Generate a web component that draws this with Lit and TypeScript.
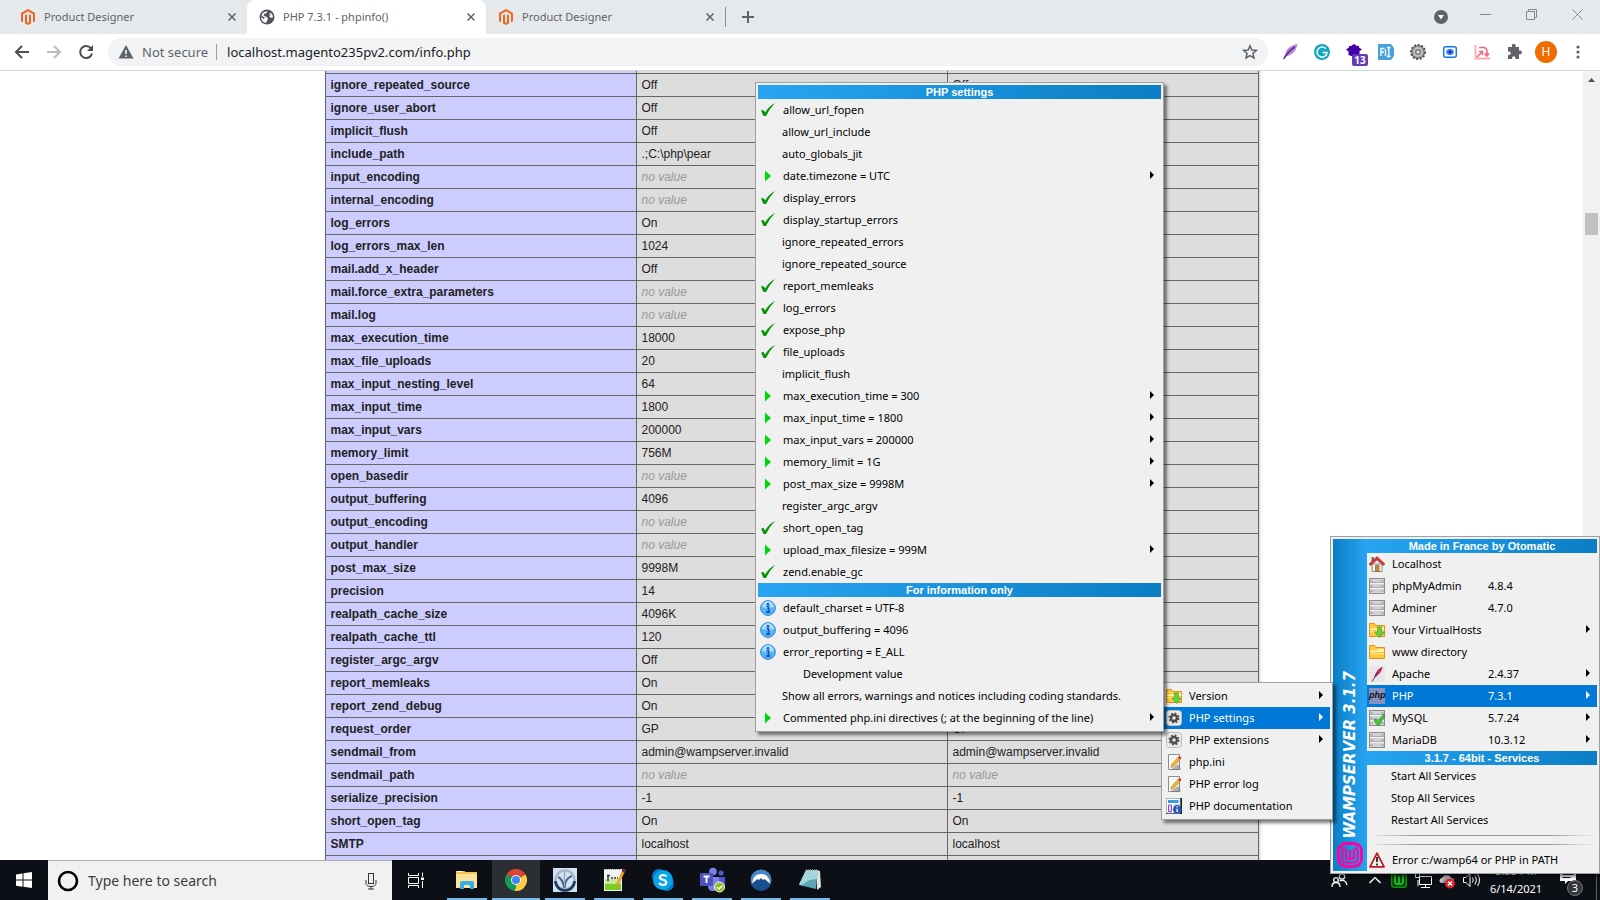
import { LitElement, html, svg, css, nothing } from "lit";
import { customElement, property } from "lit/decorators.js";
import { classMap } from "lit/directives/class-map.js";

/* ---------- icons ---------- */

const icon = (size: number, body: unknown, box = size) =>
  html`<svg width=${size} height=${size} viewBox="0 0 ${box} ${box}" aria-hidden="true">${body}</svg>`;

const magento = icon(16, svg`<path fill="#f26322" d="M8 0 1 4v8.200l2 1.100V5.200L8 2.300l5 2.900v8.100l2-1.100V4z"/>
  <path fill="#f26322" d="M5 6.300v8.100L8 16l3-1.600V6.300L9 5.200v8L8 13.800 7 13.200v-8z"/>`);
const globe = icon(16, svg`<circle cx="8" cy="8" r="7.500" fill="#50555b"/>
  <path fill="#fff" d="M8.500 2.500l-1 1.500L5 5l-.5 2 2.500.5 2 2-1 2.500-1 2C4 13.500 2 11 2 8l2.500 2L6 9 2.500 6.500C3 4 5.500 2 8.500 2.500zM10 4l2.500.5Q14 6 14 8l-2 1-2-2 1.500-1z"/>`);
const cross = icon(10, svg`<path d="M1.500 1.500l7 7m0-7l-7 7" stroke="#5f6368" stroke-width="1.500"/>`);
const plus = icon(14, svg`<path d="M7 1v12M1 7h12" stroke="#5f6368" stroke-width="2"/>`);
const back = icon(16, svg`<path d="M15 8H2.500M8 2L2 8l6 6" fill="none" stroke="#4b4f54" stroke-width="2"/>`);
const forward = icon(16, svg`<path d="M1 8h12.500M8 2l6 6-6 6" fill="none" stroke="#b9bcc0" stroke-width="2"/>`);
const reload = icon(16, svg`<path d="M13 4.500A6 6 0 1 0 14 9.500" fill="none" stroke="#4b4f54" stroke-width="2"/><path d="M15 1v6H9z" fill="#4b4f54"/>`);
const warnGrey = icon(16, svg`<path d="M8 1l7.500 13.500H.5z" fill="#5f6368"/><path d="M8 6v4M8 11.500v1.500" stroke="#fff" stroke-width="1.500"/>`);
const star = icon(16, svg`<path d="M8 1.800l1.800 4.200 4.600.4-3.500 3 1.100 4.500L8 11.500 4 13.900l1.100-4.500-3.500-3 4.600-.4z" fill="none" stroke="#5f6368" stroke-width="1.500"/>`);

const feather = icon(16, svg`<path d="M15.500 0C9 1.500 4.500 4 3.500 9.500L.5 15.500h1.500L4 12.500C11 11 14 7 15.500 0z" fill="#b58ad6"/><path d="M13 3C9 5 6 8 2 14.500" stroke="#5c2d91" stroke-width="1.400" fill="none"/>`);
const grammarly = icon(16, svg`<circle cx="8" cy="8" r="8" fill="#12a8c0"/><path d="M11.800 4.800A5 5 0 1 0 13 8.500H8.500M12.500 8.500v3" fill="none" stroke="#fff" stroke-width="1.500"/>`);
const gradCap = icon(16, svg`<path d="M8 0l3 2h2v1.500L16 5.500 13.500 7v4L8 13 2.500 11V7.500L0 5.500 3 3.500V2h2z" fill="#4200a8"/>`);
const fontTool = icon(16, svg`<path d="M0 0h13l3 4v8l-3 4H0z" fill="#46a1df"/><path d="M3 12V4.500h3.500M3 8h3M7.500 5v7M9 3.500h3.500M9 12.500h3.500M10.800 3.500v9" fill="none" stroke="#fff" stroke-width="1.300"/>`);
const cog = icon(16, svg`<circle cx="8" cy="8" r="7" fill="#8a8a8a" stroke="#555" stroke-width="2" stroke-dasharray="2 1.600"/><circle cx="8" cy="8" r="5" fill="#c2c2c2"/><circle cx="8" cy="8" r="3" fill="#777"/><circle cx="8" cy="8" r="1.500" fill="#eee"/>`);
const camera = icon(16, svg`<rect x="1.700" y="2.700" width="12.600" height="10.600" rx="2" fill="none" stroke="#1a73e8" stroke-width="1.500"/><ellipse cx="8" cy="8" rx="3.800" ry="3" fill="#2f7bff"/><circle cx="8" cy="8" r="1.400" fill="#16367c"/>`);
const ruler = icon(16, svg`<path d="M1.500 1v13.500H16" fill="none" stroke="#fba9b5" stroke-width="1.800"/><path d="M5 3.500h4q4 0 4 4V12M10.500 9.500L13 12l2-2.500M3 13l5.500-5.500M5 7.500h3.500V11" fill="none" stroke="#f4687f" stroke-width="1.600"/>`);
const puzzle = icon(16, svg`<path fill="#5f6368" d="M6 1.500a1.800 1.800 0 0 1 3.600 0V3H13v3.500h1a1.800 1.800 0 0 1 0 3.800h-1V15H9.500v-1a1.700 1.700 0 0 0-3.400 0v1H2v-4h1a1.700 1.700 0 0 0 0-3.500H2V3h4z"/>`);
const dots = icon(16, svg`<g fill="#5f6368"><circle cx="8" cy="3" r="1.600"/><circle cx="8" cy="8" r="1.600"/><circle cx="8" cy="13" r="1.600"/></g>`);

const guest = icon(14, svg`<circle cx="7" cy="7" r="7" fill="#5f6368"/><path d="M4 5h6L7 9.500z" fill="#fff"/>`);
const winMin = icon(11, svg`<path d="M0 5.500h11" stroke="#888"/>`);
const winMax = icon(11, svg`<path d="M.5 2.500h8v8h-8zM2.500 2.500v-2h8v8h-2" fill="none" stroke="#888"/>`);
const winClose = icon(11, svg`<path d="M.5.5l10 10m0-10l-10 10" stroke="#888"/>`);

const check = icon(16, svg`<path d="M1 8.500l2.500-.5L5 10.500Q9 4 15 1 9.500 6.500 6 14H3.500z" fill="#079307"/>`);
const play = icon(16, svg`<path d="M5 2.500l6 5.500-6 5.500z" fill="#00d90a"/>`);
const info = icon(16, svg`<circle cx="8" cy="8" r="7.400" fill="#55b5f6" stroke="#3f86c6"/><path d="M2 7a6 6 0 0 1 12 0Q8 9 2 7z" fill="#a5dbfd"/><path d="M6.500 6.500h2V12M6 12.200h4.200" stroke="#1353b5" stroke-width="1.700" fill="none"/><circle cx="8" cy="4.200" r="1.200" fill="#1353b5"/>`);
const folderBody = svg`<path d="M.5 1.500h5l1.500 2h8.500v11H.5z" fill="#fbc93d" stroke="#e8901c"/><path d="M1 6.500h7l1.500-1.500H15v3H1z" fill="#fff3b8"/><path d="M1 9h14v1.500H1z" fill="#fde27a"/>`;
const folder = icon(16, folderBody);
const folderDown = icon(16, svg`${folderBody}<path d="M8.500 5h4v5h3l-5 5.500-5-5.500h3z" fill="#63d13e" stroke="#3c9c25" stroke-width=".6"/>`);
const gearBox = icon(16, svg`<rect x=".5" y=".5" width="15" height="15" rx="3" fill="#e9e9e9" stroke="#bdbdbd"/><circle cx="8" cy="8" r="3" fill="none" stroke="#4c4c4c" stroke-width="2.400"/><circle cx="8" cy="8" r="4.700" fill="none" stroke="#4c4c4c" stroke-width="1.600" stroke-dasharray="1.900 1.790"/>`);
const notePen = icon(16, svg`<path d="M2.500.5h11v15h-11z" fill="#f7f7f7" stroke="#8b8b8b"/><path d="M12 10l3 5.500H5z" fill="#555" opacity=".45"/><path d="M5 13.500l1-3.500 6-6.500 2 2-6 6.500z" fill="#f6b62c" stroke="#b67a14" stroke-width=".6"/><path d="M12 3.500l1.500-1.700 2 2L14 5.500z" fill="#cf3232"/>`);
const docInfo = icon(16, svg`<path d="M0 0h16v16H0z" fill="#1b1b1b"/><path d="M.5 .5h13.500v14.500H.5z" fill="#fff" stroke="#a9b7d2"/><path d="M2 2h10.500v3H2z" fill="#3b9be0"/><path d="M2.500 7h3v6.500h-3z" fill="#ead0ff" stroke="#8a4be0"/><path d="M7.500 7H13" stroke="#9ab"/><circle cx="11.200" cy="11.200" r="4.300" fill="#2459b8"/><path d="M11.200 10.700v3.300M11.200 8.300v1.300" stroke="#fff" stroke-width="1.400"/>`);
const home = icon(16, svg`<path d="M3 8h10v7.500H3z" fill="#eee" stroke="#8d8d8d"/><path d="M6.500 9.500h3.500v6H6.500z" fill="#c98634" stroke="#8a5413" stroke-width=".6"/><path d="M2.500 1H5v5H2.500z" fill="#777"/><path d="M8 .5L16 8l-1.500 1.500L8 4 1.500 9.500 0 8z" fill="#d33a35" stroke="#95201d" stroke-width=".5"/>`);
const dbBody = svg`<rect x=".5" y=".5" width="15" height="15" fill="#d4d4d8" stroke="#8c8c8c"/><path d="M1 3h14M1 8h14M1 13h14" stroke="#b5b5bb" stroke-width="2"/><path d="M4 3h8M4 8h8M4 13h8" stroke="#d0d0d6" stroke-width="2"/><path d="M1 5.500h14M1 10.500h14" stroke="#fff"/><path d="M1 4.700h14M1 9.700h14" stroke="#85858a" stroke-width=".6"/>`;
const db = icon(16, dbBody);
const dbOk = icon(16, svg`${dbBody}<path d="M5 10l2-1.500L9 11.500l5-7 2 .5-6 10.500H8.500z" fill="#4ecb39" stroke="#22891a" stroke-width=".7"/>`);
const apache = icon(16, svg`<path fill="#e6e6e6" d="M0 0h16v16H0z"/><path d="M13.500 1C9 3 6 7 5 12 9 9.500 12 6 13.500 1z" fill="#7b2d86"/><path d="M13.500 1c-3 1.500-4.500 3-5.500 5l2.500 1.500C12 5.500 13 3 13.500 1z" fill="#d4273c"/><path d="M6.500 10L3 15.500" stroke="#a12b3a"/>`);
const phpIcon = html`<span class="php">php</span>`;
const errorTri = icon(16, svg`<path d="M8 1.200l7 13.600H1z" fill="#f4f4f4" stroke="#c0161c" stroke-width="1.800" stroke-linejoin="round"/><path d="M8 5v5M8 11.500v2" stroke="#222" stroke-width="1.800"/>`);
const wampLogo = icon(26, svg`<path d="M11 1.500H9A7.500 7.500 0 0 0 1.500 9v8A7.500 7.500 0 0 0 9 24.500h8a7.500 7.500 0 0 0 7.500-7.500V9A7.500 7.500 0 0 0 17 1.500h-2z" fill="none" stroke="#ff00a2" stroke-width="2.800"/>
  <path d="M8 5.500Q5.200 6.500 5.200 10v6.500q0 4 4.300 4h7q4.300 0 4.300-4V10q0-3.500-2.800-4.500" fill="none" stroke="#ff00a2" stroke-width="2"/>
  <path d="M9 7v7.500q0 2.500 2.300 2.500h3.400q2.300 0 2.300-2.500V7M13 8v8" fill="none" stroke="#ff00a2" stroke-width="2.200"/>`);

const windows = icon(16, svg`<path fill="#fff" d="M0 2.500L6.500 1.400v6.200H0zM7.500 1.200L16 0v7.600H7.500zM0 8.500h6.500v6.200L0 13.700zM7.500 8.500H16V16l-8.500-1.200z"/>`);
const ring = icon(22, svg`<circle cx="11" cy="11" r="9" fill="none" stroke="#000" stroke-width="2.600"/>`);
const mic = icon(18, svg`<rect x="6.500" y="1.500" width="5" height="10" fill="none" stroke="#333"/><path d="M4 8v3q0 3.500 5 3.500t5-3.500V8M9 14.500V17M6 17h6" fill="none" stroke="#333"/>`);
const taskView = icon(18, svg`<path d="M1.500 6.500h10v6h-10zM1.500 2v2.500h10V2M1.500 17v-2.500h10V17M15.500 1.500v4M15.500 10v7" fill="none" stroke="#fff"/><path fill="#fff" d="M14 6.500h3v2.500h-3z"/>`);
const explorer = icon(24, svg`<path d="M1 3h8l2 1h11v16H1z" fill="#f5c34d"/><path d="M1 6h21v14H1z" fill="#fde49b"/><path d="M2 3.500h5" stroke="#fff"/><path d="M5 21v-6q0-2 2-2h10q2 0 2 2v6h-4v-3q0-1-1-1h-4q-1 0-1 1v3z" fill="#39ace8"/>`);
const chrome = icon(24, svg`<path d="M12 12L2.500 6.500A11 11 0 0 1 21.530 6.500z" fill="#db4437"/><path d="M12 12L21.530 6.500A11 11 0 0 1 12 23z" fill="#ffcd40"/><path d="M12 12L12 23A11 11 0 0 1 2.500 6.500z" fill="#0f9d58"/><path d="M12 7h9.700L21 6H12z" fill="#db4437"/><path d="M16.300 14.500L12 23l-1.500-.5 4-6z" fill="#ffcd40"/><circle cx="12" cy="12" r="5" fill="#f1f1f1"/><circle cx="12" cy="12" r="4" fill="#4285f4"/>`);
const dataApp = icon(24, svg`<path fill="#d2e4f4" d="M0 0h24v24H0z"/><circle cx="12" cy="12" r="9.500" fill="none" stroke="#aab6c6" stroke-width="2.400"/><path d="M2.500 13a9.500 9.500 0 0 0 19 0" fill="none" stroke="#1d3a63" stroke-width="2.600"/><path d="M5 9q4 1 6.500 11Q12 10 19 8" fill="none" stroke="#46638c" stroke-width="2.200"/><path d="M11.500 4v15" stroke="#8fa3bd" stroke-width="1.400"/>`);
const notepadPP = icon(24, svg`<path fill="#f4f4f4" d="M2 1h18v22H2z"/><path fill="#7acb22" d="M3 15h16v7H3z"/><path fill="#c3ea9c" d="M3 11h16v5H3z"/><path d="M6 7v6M5 7.500h3M9 10h2M12 10h2M15 10h1" stroke="#333" stroke-width="1.500"/><path d="M3 1.500h16" stroke="#999" stroke-dasharray="1 1"/><path d="M20 3l2.500 1.500L16.500 17l-2.500 2 .3-3.500z" fill="#f0a121"/><path d="M21 .5l3 1.500-1.500 3L20 3.500z" fill="#7b3a3a"/>`);
const skype = icon(24, svg`<circle cx="8" cy="8" r="7" fill="#0a74c4"/><circle cx="16" cy="16" r="7" fill="#0a74c4"/><circle cx="12" cy="12" r="10" fill="#08a5ec"/><path d="M15.500 8.500Q14.500 7 12 7T8.800 9.300q0 1.700 3.200 2.500t3.300 2.700Q15.200 17 12 17t-3.700-2.200" fill="none" stroke="#fff" stroke-width="2.200"/>`);
const teams = icon(26, svg`<circle cx="14" cy="4.500" r="3.800" fill="#7b83eb"/><circle cx="22" cy="6" r="2.600" fill="#5059c9"/><path fill="#5059c9" d="M17 10h9v7q0 4-5 4z"/><path fill="#7b83eb" d="M9 10h11v8q0 6-6 6-5 0-5-5z"/><rect x="1" y="6" width="13" height="13" rx="1" fill="#4b53bc"/><path d="M4.500 9.500h6M7.500 9.500V16" stroke="#fff" stroke-width="1.800"/><circle cx="20.500" cy="20" r="5" fill="#8cbd18" stroke="#fff"/><path d="M18 20l2 2 3.500-3.500" fill="none" stroke="#fff" stroke-width="1.500"/>`);
const vpn = icon(24, svg`<circle cx="12" cy="12" r="10.500" fill="#4a86c8"/><path d="M2.500 16L9 9l3-1 3 1 6.500 7Q19 22.500 12 22.500T2.500 16z" fill="#1a4e92"/><path d="M3 15.500Q4 6 12 6t9 9.500L15.500 11 14 12l-2-2-2 2-1.500-1z" fill="#fff"/>`);
const notepad = icon(24, svg`<path d="M19 2l3 1 1 16-4 3z" fill="#e4e4dc"/><path d="M8 2h12l-2 19L1 17z" fill="#5ba5b5"/><path d="M8 2h12l-1 9Q10 11 4 17l-3-.500z" fill="#a5d6de"/><path d="M8 2h12" stroke="#999" stroke-width="1.500" stroke-dasharray="1 1"/>`);

const people = icon(18, svg`<g fill="none" stroke="#fff" stroke-width="1.300"><circle cx="12" cy="5.500" r="2.700"/><circle cx="6" cy="9" r="2.300"/><path d="M9.500 10q6-2.500 7.500 4M2 16q0-4.500 4-4.500t4 4.500"/></g>`);
const chevron = icon(14, svg`<path d="M1.500 10L7 4.500l5.500 5.500" fill="none" stroke="#fff" stroke-width="1.400"/>`);
const wampTray = icon(16, svg`<rect x=".7" y=".7" width="14.600" height="14.600" rx="2" fill="#0b3d10" stroke="#0b9412" stroke-width="1.400"/><path d="M4 3v7q0 2 2 2h4q2 0 2-2V3M8 4v8" fill="none" stroke="#14b81c" stroke-width="2"/>`);
const network = icon(18, svg`<path d="M5.500 5.500h12v8h-12zM11.500 13.500v3M7 16.500h9M4 9v6M1.500 1.500h4v5h-4z" fill="none" stroke="#fff"/>`);
const cloudErr = icon(18, svg`<path d="M3 12q-2-1-1.500-3T4 7q1-3 4.500-3T13 7q3 0 3 3 0 2-2 2z" fill="#bfc2c6"/><path d="M6 8q4-2 9 2l-1 2H4z" fill="#8d9196"/><circle cx="12" cy="12.500" r="5" fill="#dc2127"/><path d="M10 10.500l4 4m0-4l-4 4" stroke="#fff" stroke-width="1.500"/>`);
const volume = icon(18, svg`<path d="M1.500 6.500h2.500l4-4v13l-4-4H1.500zM10.500 6.500q1.500 2.500 0 5M13 4.500q3 4.500 0 9M15.500 3q4 6 0 12" fill="none" stroke="#fff"/>`);
const notes = icon(26, svg`<path d="M1 1h16v13H9l-3 3v-3H1z" fill="#fff"/><path d="M3.500 4.500h11M3.500 7.500h11M3.500 10.500h8" stroke="#11151a"/>`);

/* ---------- data ---------- */

const NONE = null;
const directives: [string, string | null][] = [
  ["ignore_repeated_errors", "Off"], ["ignore_repeated_source", "Off"], ["ignore_user_abort", "Off"],
  ["implicit_flush", "Off"], ["include_path", ".;C:\\php\\pear"], ["input_encoding", NONE],
  ["internal_encoding", NONE], ["log_errors", "On"], ["log_errors_max_len", "1024"],
  ["mail.add_x_header", "Off"], ["mail.force_extra_parameters", NONE], ["mail.log", NONE],
  ["max_execution_time", "18000"], ["max_file_uploads", "20"], ["max_input_nesting_level", "64"],
  ["max_input_time", "1800"], ["max_input_vars", "200000"], ["memory_limit", "756M"],
  ["open_basedir", NONE], ["output_buffering", "4096"], ["output_encoding", NONE],
  ["output_handler", NONE], ["post_max_size", "9998M"], ["precision", "14"],
  ["realpath_cache_size", "4096K"], ["realpath_cache_ttl", "120"], ["register_argc_argv", "Off"],
  ["report_memleaks", "On"], ["report_zend_debug", "On"], ["request_order", "GP"],
  ["sendmail_from", "admin@wampserver.invalid"], ["sendmail_path", NONE], ["serialize_precision", "-1"],
  ["short_open_tag", "On"], ["SMTP", "localhost"], ["smtp_port", "25"],
];

interface Item {
  label: string;
  icon?: unknown;
  version?: string;
  sub?: boolean;
  active?: boolean;
  indent?: boolean;
  kind?: "header" | "line";
}
const on = (label: string): Item => ({ label, icon: check });
const off = (label: string): Item => ({ label });
const set = (label: string): Item => ({ label, icon: play, sub: true });
const head = (label: string): Item => ({ label, kind: "header" });
const line: Item = { label: "", kind: "line" };

const settingsMenu: Item[] = [
  head("PHP settings"), on("allow_url_fopen"), off("allow_url_include"), off("auto_globals_jit"),
  set("date.timezone = UTC"), on("display_errors"), on("display_startup_errors"),
  off("ignore_repeated_errors"), off("ignore_repeated_source"), on("report_memleaks"),
  on("log_errors"), on("expose_php"), on("file_uploads"), off("implicit_flush"),
  set("max_execution_time = 300"), set("max_input_time = 1800"), set("max_input_vars = 200000"),
  set("memory_limit = 1G"), set("post_max_size = 9998M"), off("register_argc_argv"),
  on("short_open_tag"), set("upload_max_filesize = 999M"), on("zend.enable_gc"),
  head("For information only"),
  { label: "default_charset = UTF-8", icon: info }, { label: "output_buffering = 4096", icon: info },
  { label: "error_reporting = E_ALL", icon: info }, { label: "Development value", indent: true },
  off("Show all errors, warnings and notices including coding standards."),
  set("Commented php.ini directives (; at the beginning of the line)"),
];

const phpMenu: Item[] = [
  { label: "Version", icon: folderDown, sub: true },
  { label: "PHP settings", icon: gearBox, sub: true, active: true },
  { label: "PHP extensions", icon: gearBox, sub: true },
  { label: "php.ini", icon: notePen }, { label: "PHP error log", icon: notePen },
  { label: "PHP documentation", icon: docInfo },
];

const wampMenu: Item[] = [
  head("Made in France by Otomatic"),
  { label: "Localhost", icon: home }, { label: "phpMyAdmin", icon: db, version: "4.8.4" },
  { label: "Adminer", icon: db, version: "4.7.0" }, { label: "Your VirtualHosts", icon: folderDown, sub: true },
  { label: "www directory", icon: folder }, { label: "Apache", icon: apache, version: "2.4.37", sub: true },
  { label: "PHP", icon: phpIcon, version: "7.3.1", sub: true, active: true },
  { label: "MySQL", icon: dbOk, version: "5.7.24", sub: true },
  { label: "MariaDB", icon: db, version: "10.3.12", sub: true },
  head("3.1.7 - 64bit - Services"),
  off("Start All Services"), off("Stop All Services"), off("Restart All Services"),
  line, line, { label: "Error c:/wamp64 or PHP in PATH", icon: errorTri },
];

const reset = css`
  * { box-sizing: border-box; }
  svg { display: block; flex: none; }
  button { border: 0; padding: 0; margin: 0; background: none; font: inherit; color: inherit; text-align: left; }
`;

/* ---------- popup menu ---------- */

@customElement("popup-menu")
class PopupMenu extends LitElement {
  @property({ attribute: false }) items: Item[] = [];
  @property() brand = "";

  static styles = [reset, css`
    :host {
      display: flex; border: 1px solid #a0a0a0; padding: 2px; background: #f0f0f0; color: #000;
      box-shadow: 3px 3px 3px rgba(0, 0, 0, 0.5); font: 11px/22px "Noto Sans", "Open Sans", sans-serif;
    }
    .brand {
      flex: none; width: 34px; display: flex; flex-direction: column; justify-content: flex-end;
      align-items: center; gap: 4px; padding-bottom: 3px;
      background: linear-gradient(to right, #0c7dc5, #27a5f2);
    }
    .name {
      writing-mode: vertical-rl; transform: rotate(180deg); color: #fff; white-space: nowrap;
      font: italic bold 15px/20px "DejaVu Sans", sans-serif;
    }
    .list { flex: 1; display: flex; flex-direction: column; min-width: 0; }
    .header {
      height: 14px; text-align: center; color: #fff; font: bold 11px/14px "Liberation Sans", sans-serif;
      background: linear-gradient(to right, #27a5f2, #0b7dc4);
    }
    .line { height: 9px; display: flex; align-items: center; }
    .line::before {
      content: ""; flex: 1; height: 1px; margin: 0 2px;
      background: linear-gradient(to right, transparent, #999 20%, #999 80%, transparent);
    }
    .item { height: 22px; display: flex; align-items: center; gap: 7px; padding: 0 7px 0 2px; white-space: nowrap; }
    .item.active { background: #0078d7; color: #fff; }
    .slot { flex: none; width: 16px; height: 16px; }
    .plain .slot { width: 15px; }
    .indent { padding-left: 23px; }
    .label { flex: 1; }
    .versioned .label { flex: 0 0 89px; }
    .version { flex: 1; }
    .arrow { width: 4px; height: 8px; margin-bottom: 2px; background: currentColor; clip-path: polygon(0 0, 100% 50%, 0 100%); }
    .php { display: block; height: 16px; background: #8892bf; color: #111; font: italic bold 9px/15px "Liberation Sans", sans-serif; text-align: center; }
  `];

  render() {
    return html`
      ${this.brand ? html`<div class="brand"><span class="name">${this.brand}</span>${wampLogo}</div>` : nothing}
      <div class="list" role="menu">
        ${this.items.map((it) =>
          it.kind === "header" ? html`<div class="header">${it.label}</div>`
          : it.kind === "line" ? html`<div class="line" role="separator"></div>`
          : html`<button role="menuitem" class=${classMap({
              item: true, active: !!it.active, plain: !it.icon, indent: !!it.indent, versioned: !!it.version,
            })}>
              <span class="slot">${it.icon ?? nothing}</span>
              <span class="label">${it.label}</span>
              ${it.version ? html`<span class="version">${it.version}</span>` : nothing}
              ${it.sub ? html`<span class="arrow"></span>` : nothing}
            </button>`)}
      </div>`;
  }
}

/* ---------- browser chrome ---------- */

@customElement("browser-bar")
class BrowserBar extends LitElement {
  static styles = [reset, css`
    :host { display: block; font: 11px/16px "Noto Sans", sans-serif; color: #5f6368; background: #e5e9ec; }
    .strip { display: flex; height: 34px; padding-left: 8px; }
    .tab { width: 239px; display: flex; align-items: center; gap: 8px; padding: 0 10px 0 12px; border-radius: 8px 8px 0 0; }
    .tab.active { background: #fff; }
    .title { flex: 1; }
    .plus { padding-left: 15px; display: flex; align-items: center; }
    .rule { align-self: center; width: 1px; height: 20px; background: #8b8f93; }
    .spacer { flex: 1; }
    .guest { display: grid; place-items: center; width: 42px; }
    .win { width: 46px; height: 28px; display: grid; place-items: center; }
    .bar { display: flex; align-items: center; height: 37px; padding: 0 6px 1px; background: #fff; border-bottom: 1px solid #d6d7da; }
    .nav, .ext { width: 32px; height: 32px; display: grid; place-items: center; flex: none; }
    .omni {
      flex: 1; display: flex; align-items: center; height: 28px; margin: 0 6px; padding: 0 10px;
      border-radius: 14px; background: #f1f3f4; font-size: 13px; gap: 8px;
    }
    .sep { width: 1px; height: 16px; background: #9aa0a6; }
    .url { flex: 1; border: 0; padding: 0 0 0 2px; margin: 0; background: none; outline: 0; font: inherit; color: #202124; }
    .ext { position: relative; }
    .badge {
      position: absolute; left: 14px; bottom: 2px; width: 16px; height: 12px; border-radius: 2px; background: #673ab7;
      color: #fff; font: bold 10px/12px "Noto Sans", sans-serif; text-align: center;
    }
    .avatar { width: 22px; height: 22px; border-radius: 50%; background: #ef6c00; color: #fff; font: 12px/22px "Noto Sans", sans-serif; text-align: center; }
  `];

  render() {
    const tabs = [
      { title: "Product Designer", icon: magento }, { title: "PHP 7.3.1 - phpinfo()", icon: globe, active: true },
      { title: "Product Designer", icon: magento },
    ];
    const ext: [string, unknown][] = [
      ["Feather", feather], ["Grammar", grammarly],
      ["Courses", html`${gradCap}<span class="badge">13</span>`], ["Fonts", fontTool], ["Settings", cog],
      ["Capture", camera], ["Measure", ruler], ["Extensions", puzzle],
      ["Profile", html`<span class="avatar">H</span>`], ["Menu", dots],
    ];
    return html`
      <div class="strip">
        ${tabs.map((t) => html`<div class=${classMap({ tab: true, active: !!t.active })}>
          ${t.icon}<span class="title">${t.title}</span><button aria-label="Close tab">${cross}</button></div>`)}
        <span class="rule"></span>
        <button class="plus" aria-label="New tab">${plus}</button>
        <span class="spacer"></span>
        <button class="guest" aria-label="Search tabs">${guest}</button>
        <button class="win" aria-label="Minimize">${winMin}</button>
        <button class="win" aria-label="Restore">${winMax}</button>
        <button class="win" aria-label="Close">${winClose}</button>
      </div>
      <div class="bar">
        <button class="nav" aria-label="Back">${back}</button>
        <button class="nav" aria-label="Forward">${forward}</button>
        <button class="nav" aria-label="Reload">${reload}</button>
        <div class="omni">
          ${warnGrey}<span>Not secure</span><span class="sep"></span>
          <input class="url" aria-label="Address" .value=${"localhost.magento235pv2.com/info.php"} />
          ${star}
        </div>
        ${ext.map(([name, glyph]) => html`<button class="ext" aria-label=${name}>${glyph}</button>`)}
      </div>`;
  }
}

/* ---------- phpinfo page ---------- */

@customElement("info-page")
class InfoPage extends LitElement {
  static styles = [reset, css`
    :host { display: flex; overflow: hidden; background: #fff; }
    .page { flex: 1; overflow: hidden; }
    .table {
      width: 934px; margin: -21px auto 0; table-layout: fixed; border-collapse: collapse;
      box-shadow: 1px 2px 3px #ccc; font: 12px/14px "Liberation Sans", Arial, sans-serif; color: #222;
    }
    .key, .value { border: 1px solid #666; padding: 4px 5px; text-align: left; background: #ddd; }
    .key { background: #ccf; font-weight: bold; }
    .none { color: #999; font-style: italic; }
    .scroll { flex: none; width: 17px; background: #f1f1f1; padding: 7px 2px 0; }
    .up { height: 4px; margin: 0 3px; background: #505050; clip-path: polygon(50% 0, 100% 100%, 0 100%); }
    .thumb { height: 22px; margin-top: 131px; background: #c1c1c1; }
  `];

  render() {
    const cell = (v: string | null) => html`<td class="value">${v ?? html`<i class="none">no value</i>`}</td>`;
    return html`
      <div class="page">
        <table class="table"><tbody>
          ${directives.map(([k, v]) => html`<tr><th class="key" scope="row">${k}</th>${cell(v)}${cell(v)}</tr>`)}
        </tbody></table>
      </div>
      <div class="scroll"><div class="up"></div><div class="thumb"></div></div>`;
  }
}

/* ---------- taskbar ---------- */

@customElement("task-bar")
class TaskBar extends LitElement {
  static styles = [reset, css`
    :host { display: flex; height: 40px; background: #0c1016; color: #fff; font: 12px/18px "Noto Sans", sans-serif; }
    .cell { width: 48px; display: grid; place-items: center; flex: none; }
    .search {
      width: 344px; display: flex; align-items: center; gap: 9px; padding: 0 12px 0 9px;
      background: #f1f1f1; border-top: 1px solid #aaa;
    }
    .query { flex: 1; min-width: 0; border: 0; padding: 0; background: none; outline: 0; font: 14px/20px "Noto Sans", sans-serif; }
    .query::placeholder { color: #3c3c3c; opacity: 1; }
    .apps { display: flex; gap: 1px; padding-left: 3px; flex: 1; }
    .app { background: linear-gradient(#76b9ed, #76b9ed) 50% 100% / 40px 2px no-repeat; }
    .app.current { background: linear-gradient(#76b9ed, #76b9ed) 50% 100% / 48px 2px no-repeat #2b2e33; }
    .tray { width: 24px; display: grid; place-items: center; }
    .people { margin-right: 12px; }
    .clock { width: 66px; font-size: 11px; text-align: center; padding-top: 2px; }
    .notes { width: 47px; display: grid; place-items: center; position: relative; padding-right: 2px; }
    .count {
      position: absolute; left: 18px; bottom: 4px; width: 16px; height: 16px; border-radius: 50%;
      background: #333639; border: 1px solid #777; font-size: 11px; line-height: 14px; text-align: center;
    }
    .desk { width: 4px; border-left: 1px solid #5c5f63; }
  `];

  render() {
    const apps: [string, unknown][] = [
      ["File Explorer", explorer], ["Chrome", chrome], ["Data tool", dataApp], ["Notepad++", notepadPP],
      ["Skype", skype], ["Teams", teams], ["VPN", vpn], ["Notepad", notepad],
    ];
    return html`
      <button class="cell" aria-label="Start">${windows}</button>
      <label class="search">${ring}<input class="query" type="text" placeholder="Type here to search" aria-label="Search" />${mic}</label>
      <button class="cell" aria-label="Task view">${taskView}</button>
      <div class="apps">
        ${apps.map(([name, glyph]) => html`<button aria-label=${name}
          class=${classMap({ cell: true, app: true, current: name === "Chrome" })}>${glyph}</button>`)}
      </div>
      <button class="tray people" aria-label="People">${people}</button>
      <button class="tray" aria-label="Hidden icons">${chevron}</button>
      <button class="tray" aria-label="WampServer">${wampTray}</button>
      <button class="tray" aria-label="Network">${network}</button>
      <button class="tray" aria-label="OneDrive">${cloudErr}</button>
      <button class="tray" aria-label="Volume">${volume}</button>
      <div class="clock"><div>3:33 PM</div><div>6/14/2021</div></div>
      <button class="notes" aria-label="Notifications">${notes}<span class="count">3</span></button>
      <span class="desk"></span>`;
  }
}

@customElement("app-root")
class AppRoot extends LitElement {
  static styles = css`
    :host { display: flex; flex-direction: column; height: 100vh; position: relative; overflow: hidden; }
    .page { flex: 1; min-height: 0; }
    .bar, .task { flex: none; }
    .menu { position: absolute; box-sizing: border-box; }
    .wamp { right: 0; bottom: 26px; width: 270px; }
    .php { right: 267px; bottom: 80px; width: 172px; }
    .settings { right: 436px; bottom: 168px; width: 409px; }
  `;

  render() {
    return html`
      <browser-bar class="bar"></browser-bar>
      <info-page class="page"></info-page>
      <task-bar class="task"></task-bar>
      <popup-menu class="menu wamp" brand="WAMPSERVER 3.1.7" .items=${wampMenu}></popup-menu>
      <popup-menu class="menu php" .items=${phpMenu}></popup-menu>
      <popup-menu class="menu settings" .items=${settingsMenu}></popup-menu>`;
  }
}
